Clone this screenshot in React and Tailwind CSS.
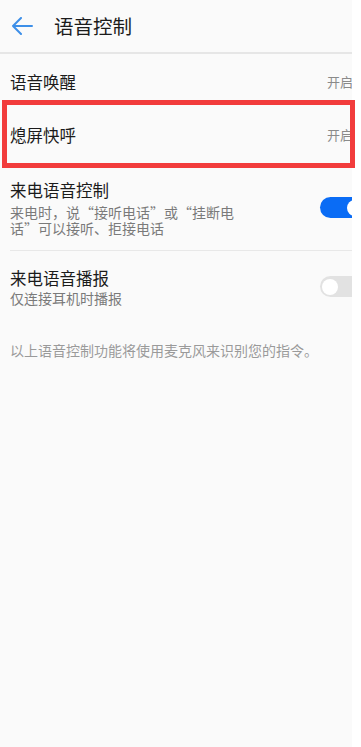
import React from 'react'

const font = { fontFamily: '"Noto Sans CJK SC", "Noto Sans", sans-serif' }

const Toggle = ({ on }) => (
  <div
    className={`relative w-[44px] h-[21px] rounded-full shrink-0 ${on ? 'bg-[#0a6cf5]' : 'bg-[#e2e2e2]'}`}
  >
    <div
      className={`absolute top-[2.5px] w-[16px] h-[16px] rounded-full bg-white ${on ? 'left-[27px]' : 'left-[2px]'}`}
    />
  </div>
)

export default function App() {
  return (
    <div className="relative w-[361px] h-[747px] flex bg-white" style={font}>
      <div className="w-[352px] h-full bg-[#fafafa] overflow-hidden">
        {/* header */}
        <div className="h-[52px] flex items-center">
          <svg width="22" height="18" viewBox="0 0 22 18" className="ml-[11px]" fill="none">
            <path d="M21 9H2M10 1L2 9l8 8" stroke="#3d8fe8" strokeWidth="2" strokeLinecap="round" strokeLinejoin="round" />
          </svg>
          <span className="ml-[21px] text-[19.5px] leading-[26px] text-[#1b1b1b]">语音控制</span>
        </div>
        <div className="h-[2px] bg-[#e6e6e6]" />

        {/* 语音唤醒 */}
        <div className="h-[56px] flex items-center justify-between pl-[10px]">
          <span className="text-[16.5px] text-[#1b1b1b]">语音唤醒</span>
          <span className="text-[13px] text-[#8a8a8a] mr-[-1px]">开启</span>
        </div>

        {/* 熄屏快呼 */}
        <div className="h-[50px] flex items-center justify-between pl-[10px]">
          <span className="text-[16.5px] text-[#1b1b1b]">熄屏快呼</span>
          <span className="text-[13px] text-[#8a8a8a] mr-[-1px]">开启</span>
        </div>

        {/* 来电语音控制 */}
        <div className="flex items-center justify-between pl-[10px] pt-[19px] pb-[14px]">
          <div className="w-[240px]">
            <div className="text-[16.5px] leading-[22px] text-[#1b1b1b]">来电语音控制</div>
            <div className="mt-[3px] text-[14px] leading-[16px] text-[#7a7a7a]">
              来电时，说“接听电话”或“挂断电话”可以接听、拒接电话
            </div>
          </div>
          <div className="mr-[-12px]">
            <Toggle on />
          </div>
        </div>
        <div className="h-px bg-[#e8e8e8] ml-[10px]" />

        {/* 来电语音播报 */}
        <div className="flex items-center justify-between pl-[10px] pt-[16px]">
          <div>
            <div className="text-[16.5px] leading-[22px] text-[#1b1b1b]">来电语音播报</div>
            <div className="mt-px text-[14px] leading-[16px] text-[#7a7a7a]">仅连接耳机时播报</div>
          </div>
          <div className="mr-[-12px]">
            <Toggle />
          </div>
        </div>

        <p className="mt-[34px] pl-[10px] text-[14px] leading-[20px] text-[#9a9a9a]">
          以上语音控制功能将使用麦克风来识别您的指令。
        </p>
      </div>

      {/* red highlight */}
      <div className="absolute left-[2px] top-[100px] w-[353px] h-[68px] border-[5px] border-[#f23c3c]" />
    </div>
  )
}
